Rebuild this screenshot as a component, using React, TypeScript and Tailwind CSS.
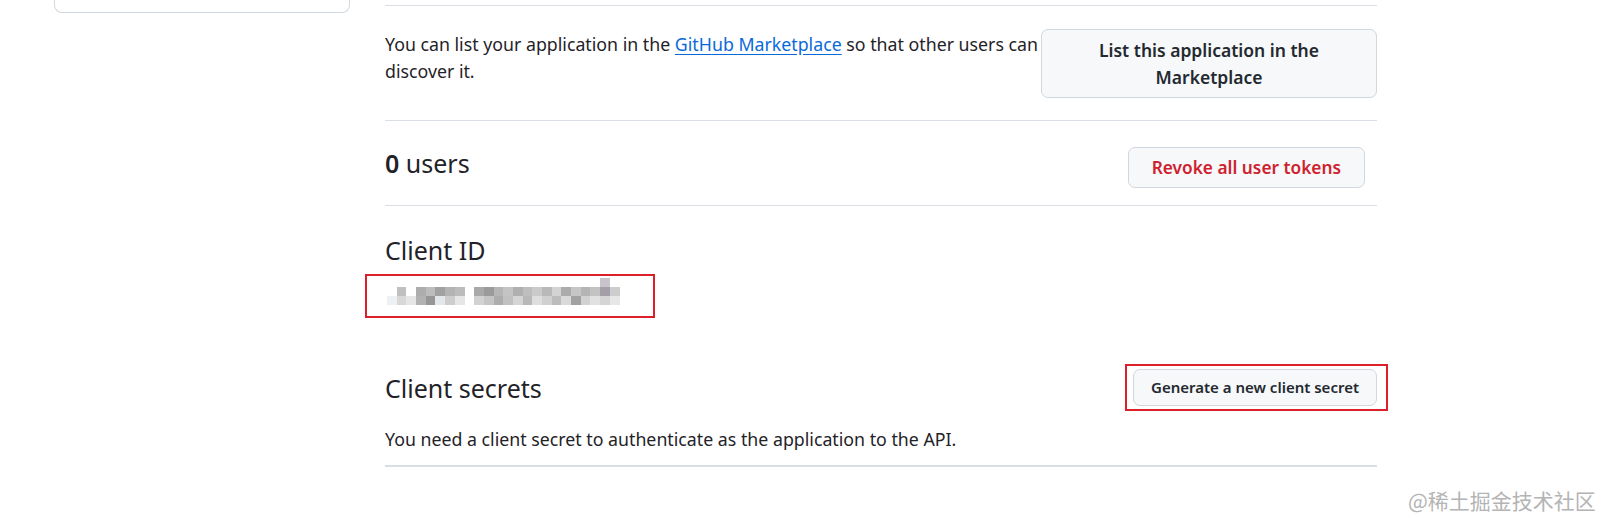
import React from "react";

// Pixelated (blurred) client id: three rows of mosaic cells
const mosaic: string[][] = [
  [
    "", "", "", "", "", "", "", "", "", "", "", "", "", "", "", "", "", "", "", "", "", "", "bg-[#c9c4cc]", "",
  ],
  [
    "", "bg-[#c0c0c0]", "", "bg-[#adadad]", "bg-[#bdbdbd]", "bg-[#a1a1a1]", "bg-[#b3b3b3]", "bg-[#bcbcbc]", "",
    "bg-[#a9a9a9]", "bg-[#9b9b9b]", "bg-[#b6b6b6]", "bg-[#c4c4c4]", "bg-[#b0b0b0]", "bg-[#bebebe]", "bg-[#cacaca]",
    "bg-[#b9b9b9]", "bg-[#d3d3d3]", "bg-[#acacac]", "bg-[#c6c6c6]", "bg-[#b5b5b5]", "bg-[#c3c3c3]", "bg-[#a39fa8]", "bg-[#cdcdcd]",
  ],
  [
    "bg-[#eef1f4]", "bg-[#d8d8d8]", "bg-[#e6e6e6]", "bg-[#b2b2b2]", "bg-[#969696]", "bg-[#e3e6ea]", "bg-[#cdcdcd]", "bg-[#e6e6e6]", "",
    "bg-[#d2d2d2]", "bg-[#c5c5c5]", "bg-[#adadad]", "bg-[#c1c1c1]", "bg-[#d5d5d5]", "bg-[#b8b8b8]", "bg-[#dedede]",
    "bg-[#d0d0d0]", "bg-[#bcbcbc]", "bg-[#dadada]", "bg-[#a2a2a2]", "bg-[#d2d2d2]", "bg-[#e1e1e1]", "bg-[#d5d5d5]", "bg-[#e7e7e7]",
  ],
];

const ClientIdMosaic: React.FC = () => (
  <div className="flex flex-col">
    {mosaic.map((row, r) => (
      <div key={r} className="flex">
        {row.map((cls, c) => (
          <div key={c} className={`w-[9.7px] h-[9px] ${cls}`} />
        ))}
      </div>
    ))}
  </div>
);

export default function App() {
  return (
    <div className="relative w-[1604px] h-[518px] overflow-hidden bg-white text-[#1f2328] font-['Noto_Sans','Liberation_Sans',sans-serif]">
      <div className="flex items-start">
        {/* Sidebar card (top is scrolled off) */}
        <aside className="ml-[54px] w-[296px] h-[13px] border-x border-b border-[#d0d7de] rounded-b-[8px]" />

        {/* Settings column */}
        <main className="ml-[35px] w-[992px]">
          {/* Marketplace */}
          <section className="mt-[5px] border-t border-[#d8dee4] pt-[23px] pb-[22px] flex items-start justify-between">
            <p className="mt-[2px] w-[656px] text-[17.75px] leading-[27px]">
              You can list your application in the{" "}
              <a className="text-[#0969da] underline underline-offset-[3px]">GitHub Marketplace</a> so that other users can
              discover it.
            </p>
            <button className="shrink-0 w-[336px] h-[69px] px-4 rounded-[7px] border border-[#d0d7de] bg-[#f6f8fa] text-[17.5px] leading-[27px] font-semibold text-[#24292f]">
              List this application in the Marketplace
            </button>
          </section>

          {/* Users */}
          <section className="border-t border-[#d8dee4] pt-[25px] pb-[17px] flex items-start justify-between">
            <h2 className="text-[25px] leading-[34px]">
              <span className="font-semibold">0</span> users
            </h2>
            <button className="mt-[1px] mr-[12px] h-[41px] px-[23px] rounded-[7px] border border-[#d0d7de] bg-[#f6f8fa] text-[17.3px] font-semibold text-[#cf222e]">
              Revoke all user tokens
            </button>
          </section>

          {/* Client ID */}
          <section className="border-t border-[#d8dee4] pt-[27px]">
            <h2 className="text-[25px] leading-[34px]">Client ID</h2>
            <div className="mt-[7px] -ml-[20px] w-[290px] h-[44px] border-2 border-[#dc1f28] pl-[20px] pt-[2px]">
              <ClientIdMosaic />
            </div>
          </section>

          {/* Client secrets */}
          <section className="mt-[46px] pb-[12px] border-b-2 border-[#d8dee4]">
            <div className="flex items-center justify-between">
              <h2 className="text-[25px] leading-[34px]">Client secrets</h2>
              <div className="-mr-[11px] border-2 border-[#dc1f28] pl-[6px] pr-[9px] pt-[3px] pb-[3px]">
                <button className="h-[37px] px-[17px] rounded-[7px] border border-[#d0d7de] bg-[#f6f8fa] text-[15px] font-semibold text-[#24292f]">
                  Generate a new client secret
                </button>
              </div>
            </div>
            <p className="mt-[15px] text-[17.75px] leading-[27px]">
              You need a client secret to authenticate as the application to the API.
            </p>
          </section>
        </main>
      </div>

      {/* Watermark */}
      <div className="absolute left-[1408px] top-[486px] text-[21px] leading-[28px] text-[#b4b4b4] font-['Noto_Sans_CJK_SC',sans-serif]">
        @稀土掘金技术社区
      </div>
    </div>
  );
}
